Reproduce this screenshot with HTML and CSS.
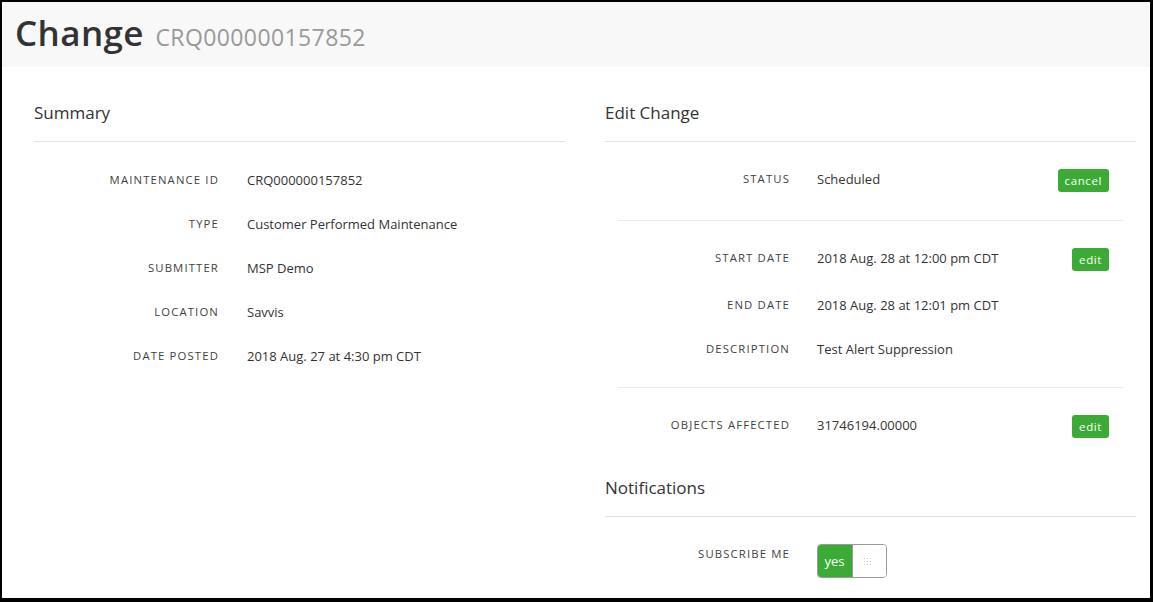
FILE: index.html
```html
<!DOCTYPE html>
<html>
<head>
<meta charset="utf-8">
<link rel="stylesheet" href="styles.css">
</head>
<body>
<div class="frame">
  <header class="page-head">
    <h1 class="title">Change <span class="title-id">CRQ000000157852</span></h1>
  </header>
  <main class="content">
    <section class="col">
      <h2 class="sec-title">Summary</h2>
      <div class="list">
        <div class="row"><div class="label">Maintenance ID</div><div class="value">CRQ000000157852</div></div>
        <div class="row"><div class="label">Type</div><div class="value">Customer Performed Maintenance</div></div>
        <div class="row"><div class="label">Submitter</div><div class="value">MSP Demo</div></div>
        <div class="row"><div class="label">Location</div><div class="value">Savvis</div></div>
        <div class="row"><div class="label">Date Posted</div><div class="value">2018 Aug. 27 at 4:30 pm CDT</div></div>
      </div>
    </section>
    <section class="col">
      <h2 class="sec-title">Edit Change</h2>
      <div class="group">
        <div class="row row-btn"><div class="label label-in">Status</div><div class="value">Scheduled</div><button class="btn">cancel</button></div>
      </div>
      <div class="group">
        <div class="row row-btn"><div class="label label-in">Start Date</div><div class="value">2018 Aug. 28 at 12:00 pm CDT</div><button class="btn">edit</button></div>
        <div class="row"><div class="label label-in">End Date</div><div class="value">2018 Aug. 28 at 12:01 pm CDT</div></div>
        <div class="row"><div class="label label-in">Description</div><div class="value">Test Alert Suppression</div></div>
      </div>
      <div class="group group-last">
        <div class="row row-btn"><div class="label label-in">Objects Affected</div><div class="value">31746194.00000</div><button class="btn">edit</button></div>
      </div>
      <h2 class="sec-title sec-notif">Notifications</h2>
      <div class="notif">
        <div class="row"><div class="label">Subscribe Me</div>
          <div class="toggle"><span class="toggle-on">yes</span><span class="toggle-knob"><span class="grip"></span></span></div>
        </div>
      </div>
    </section>
  </main>
</div>
</body>
</html>
```
FILE: styles.css
```css
* { box-sizing: border-box; }
html, body { margin: 0; padding: 0; background: #000; }
body { font-family: "Open Sans", "Noto Sans", sans-serif; color: #333; }
.frame {
  width: 1153px; height: 602px;
  border-style: solid; border-color: #000;
  border-width: 2px 3px 4px 2px;
  background: #fff;
  overflow: hidden;
}
.page-head {
  height: 65px;
  background: #f8f8f8;
  padding-left: 13px;
}
.title {
  margin: 0;
  font-size: 35px;
  font-weight: 600;
  line-height: 62px;
  color: #333;
  letter-spacing: 0.4px;
}
.title-id {
  font-size: 23px;
  font-weight: 400;
  color: #999;
  margin-left: 2px;
  letter-spacing: 0.4px;
}
.content {
  display: grid;
  grid-template-columns: 531px 531px;
  column-gap: 40px;
  padding: 33px 14px 0 32px;
}
.sec-title {
  margin: 0;
  font-size: 17px;
  font-weight: 400;
  line-height: 26px;
  padding-bottom: 15px;
  border-bottom: 1px solid #e2e2e2;
  color: #333;
}
.sec-notif { margin-top: 9px; }
.list { padding-top: 16px; }
.row {
  display: flex;
  align-items: flex-start;
  padding: 12px 0;
  min-height: 44px;
}
.label {
  width: 185px;
  flex: none;
  text-align: right;
  font-size: 11.3px;
  letter-spacing: 1.15px;
  text-transform: uppercase;
  line-height: 20px;
  color: #3f3f3f;
}
.value {
  margin-left: 28px;
  font-size: 13px;
  line-height: 20px;
  color: #333;
  flex: 1;
}
.group {
  margin: 0 13px;
  padding: 15px 0 16px;
  border-bottom: 1px solid #ebebeb;
}
.group-last { border-bottom: none; }
.label-in { width: 172px; }
.label-in + .value { margin-left: 27px; }
.row-btn { padding-right: 14px; }
.btn {
  flex: none;
  height: 23px;
  border: none;
  border-radius: 3px;
  background: #3bab35;
  color: #fff;
  font-family: "Open Sans", "Noto Sans", sans-serif;
  font-size: 11.5px;
  letter-spacing: 0.6px;
  padding: 0 7px;
  line-height: 23px;
}
.notif { padding-top: 15px; }
.toggle {
  margin-left: 27px;
  display: flex;
  width: 70px;
  height: 34px;
  border: 1px solid #9a9a9a;
  border-radius: 4px;
  overflow: hidden;
}
.toggle-on {
  width: 35px;
  margin: -1px 0 -1px -1px;
  background: #3bab35;
  color: #fff;
  font-size: 13px;
  line-height: 34px;
  text-align: center;
}
.toggle-knob {
  flex: 1;
  background: #fff;
  display: flex;
  align-items: center;
  justify-content: center;
  border-left: 1px solid #9a9a9a;
}
.grip {
  width: 8px; height: 8px;
  background-image: radial-gradient(circle, #c8c8c8 0.8px, transparent 1px);
  background-size: 3px 3px;
  margin-right: 6px;
}
```
